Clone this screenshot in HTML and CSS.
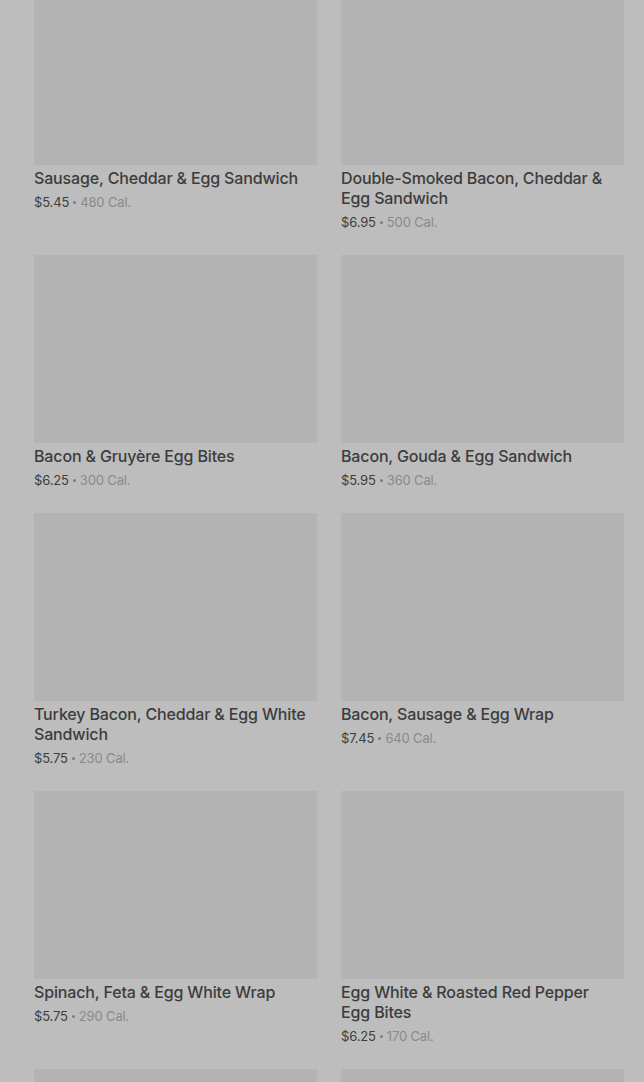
FILE: index.html
```html
<!DOCTYPE html>
<html>
<head>
<meta charset="utf-8">
<link rel="stylesheet" href="styles.css">
</head>
<body>
<main class="grid">
  <div class="card"><div class="img"></div><div class="title">Sausage, Cheddar &amp; Egg Sandwich</div><div class="meta"><span class="price">$5.45</span><span class="dot"></span><span class="cal">480 Cal.</span></div></div>
  <div class="card"><div class="img"></div><div class="title">Double-Smoked Bacon, Cheddar &amp; Egg Sandwich</div><div class="meta"><span class="price">$6.95</span><span class="dot"></span><span class="cal">500 Cal.</span></div></div>
  <div class="card"><div class="img"></div><div class="title">Bacon &amp; Gruyère Egg Bites</div><div class="meta"><span class="price">$6.25</span><span class="dot"></span><span class="cal">300 Cal.</span></div></div>
  <div class="card"><div class="img"></div><div class="title">Bacon, Gouda &amp; Egg Sandwich</div><div class="meta"><span class="price">$5.95</span><span class="dot"></span><span class="cal">360 Cal.</span></div></div>
  <div class="card"><div class="img"></div><div class="title">Turkey Bacon, Cheddar &amp; Egg White Sandwich</div><div class="meta"><span class="price">$5.75</span><span class="dot"></span><span class="cal">230 Cal.</span></div></div>
  <div class="card"><div class="img"></div><div class="title">Bacon, Sausage &amp; Egg Wrap</div><div class="meta"><span class="price">$7.45</span><span class="dot"></span><span class="cal">640 Cal.</span></div></div>
  <div class="card"><div class="img"></div><div class="title">Spinach, Feta &amp; Egg White Wrap</div><div class="meta"><span class="price">$5.75</span><span class="dot"></span><span class="cal">290 Cal.</span></div></div>
  <div class="card"><div class="img"></div><div class="title">Egg White &amp; Roasted Red Pepper Egg Bites</div><div class="meta"><span class="price">$6.25</span><span class="dot"></span><span class="cal">170 Cal.</span></div></div>
  <div class="card"><div class="img"></div></div>
  <div class="card"><div class="img"></div></div>
</main>
</body>
</html>
```
FILE: styles.css
```css
html, body {
  margin: 0;
  padding: 0;
  background: #bdbdbd;
  overflow: hidden;
  height: 1082px;
}
body {
  font-family: Inter, "Noto Sans", sans-serif;
}
.grid {
  display: grid;
  grid-template-columns: 283px 283px;
  column-gap: 24px;
  row-gap: 24px;
  padding: 0 20px 0 34px;
  margin-top: -23px;
  align-items: start;
}
.img {
  height: 188px;
  background: #b3b3b3;
}
.title {
  margin-top: 3px;
  padding-right: 6px;
  font-size: 16px;
  line-height: 20px;
  font-weight: 500;
  letter-spacing: -0.15px;
  color: #3c3c3c;
}
.meta {
  margin-top: 3px;
  padding-top: 1px;
  display: flex;
  align-items: center;
  height: 19px;
  font-size: 13px;
  line-height: 18px;
  letter-spacing: -0.15px;
  color: #3e3e3e;
}
.dot {
  width: 3px;
  height: 3px;
  border-radius: 50%;
  background: #7d7d7d;
  margin: 1px 4px 0 4px;
}
.cal {
  color: #8a8a8a;
}
```
